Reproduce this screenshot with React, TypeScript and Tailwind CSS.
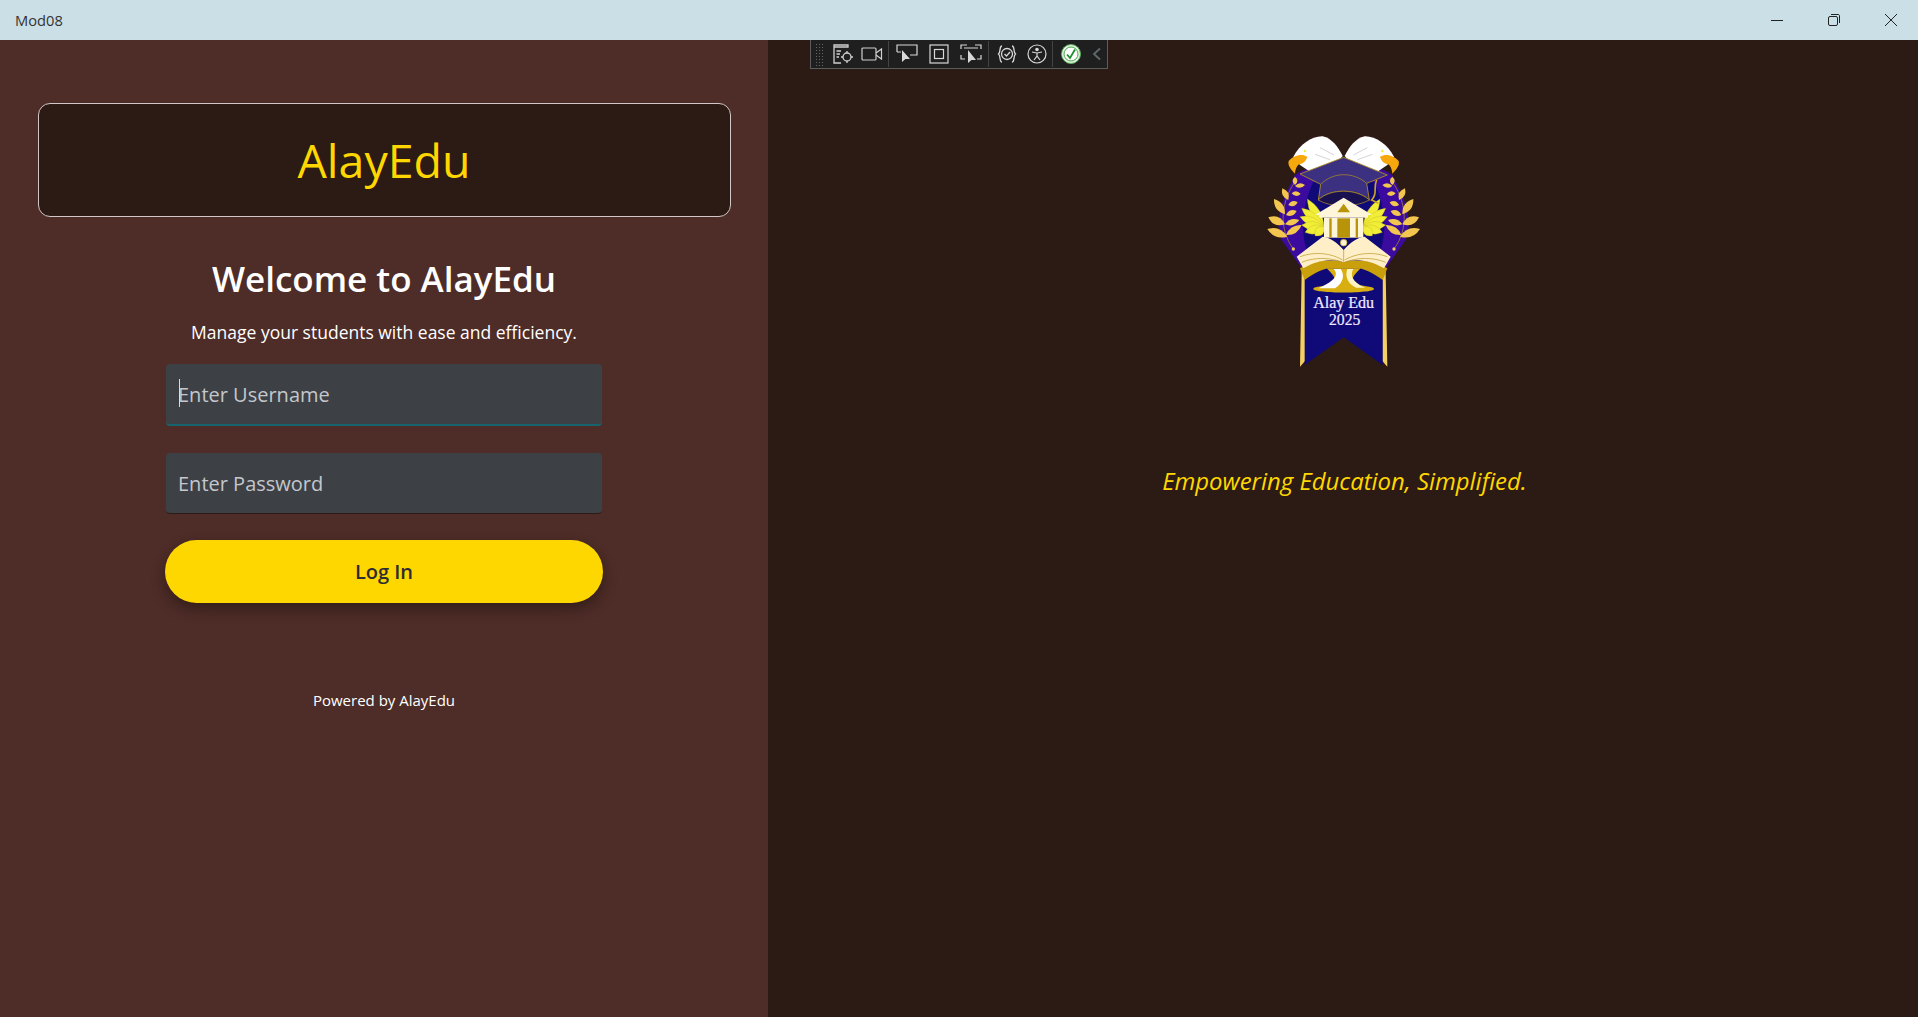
const leaves: [number, number, number, number, number][] = [
  [112, 335, 52, 312, 24],
  [105, 298, 55, 277, 24],
  [105, 268, 72, 222, 22],
  [115, 225, 97, 190, 18],
  [135, 180, 135, 155, 14],
  [108, 330, 155, 300, 20],
  [105, 298, 148, 285, 18],
  [108, 270, 140, 258, 16],
  [115, 240, 143, 232, 15],
  [125, 205, 152, 207, 14],
  [135, 183, 165, 180, 14],
]

const feathers: [number, number][] = [
  [172, 222],
  [155, 250],
  [150, 275],
  [155, 300],
  [165, 322],
  [195, 332],
]

// pointed leaf from base to tip
function leafPath(bx: number, by: number, tx: number, ty: number, w: number) {
  const mx = (bx + tx) / 2
  const my = (by + ty) / 2
  const len = Math.hypot(tx - bx, ty - by)
  const nx = (-(ty - by) / len) * w
  const ny = ((tx - bx) / len) * w
  return `M${bx} ${by}Q${mx + nx} ${my + ny} ${tx} ${ty}Q${mx - nx} ${my - ny} ${bx} ${by}Z`
}

function HalfLogo() {
  return (
    <g>
      <path d="M130 95C150 58 185 33 218 34C245 40 264 65 278 93L250 125L180 140L150 120Z" fill="#fff" />
      <path d="M195 88L240 104M210 68L252 90" stroke="#d5d5da" strokeWidth="3" fill="none" />
      <path d="M116 108C130 92 155 84 172 96C168 108 160 116 148 118C140 122 136 134 135 146C124 134 112 122 116 108Z" fill="#f7a80d" />
      <circle cx="165" cy="78" r="4" fill="#f3ee3a" />
      <path d="M130 372C85 310 90 230 142 160" fill="none" stroke="#b8941f" strokeWidth="2" />
      <circle cx="130" cy="372" r="5" fill="#f0c95a" />
      {leaves.map(([bx, by, tx, ty, w]) => (
        <path key={`${tx}-${ty}`} d={leafPath(bx, by, tx, ty, w)} fill="#f2c64f" />
      ))}
      {feathers.map(([tx, ty]) => (
        <path key={`${tx}-${ty}`} d={leafPath(222, 305, tx, ty, 26)} fill="#f2ee38" stroke="#b9ad18" strokeWidth="1" />
      ))}
    </g>
  )
}

function Logo() {
  return (
    <svg viewBox="0 0 570 735" className="w-[190px] h-[245px]">
      <path d="M135 150C190 105 372 105 427 150C462 220 492 280 467 345L407 430H155L95 345C70 280 100 220 135 150Z" fill="#3b0a9e" />
      <path d="M190 170H372C410 250 415 340 375 420H187C147 340 152 250 190 170Z" fill="#100a78" />
      <HalfLogo />
      <g transform="translate(562 0) scale(-1 1)">
        <HalfLogo />
      </g>
      <path d="M150 147L281 97L412 150L350 175L358 225C320 190 240 190 205 225L212 178Z" fill="#3b3180" stroke="#b8941f" strokeWidth="2.5" />
      <path d="M212 178C250 140 310 140 350 175" fill="none" stroke="#b8941f" strokeWidth="2" />
      <path d="M205 225C240 190 320 190 358 225C320 248 240 248 205 225Z" fill="#1a1250" stroke="#b8941f" strokeWidth="2" />
      <path d="M380 165C368 190 385 205 365 225L385 235" fill="none" stroke="#c9a227" strokeWidth="5" />
      <path d="M195 270L281 218L367 270Z" fill="#fff5d8" />
      <path d="M262 262L281 236L300 262Z" fill="#b8940a" />
      <rect x="208" y="268" width="146" height="10" fill="#fff5d8" />
      <rect x="222" y="278" width="118" height="60" fill="#fff5d8" />
      <rect x="262" y="280" width="38" height="58" fill="#b8940a" />
      <rect x="238" y="280" width="7" height="58" fill="#b8940a" />
      <rect x="317" y="280" width="7" height="58" fill="#b8940a" />
      <path d="M150 725L155 440H165V708ZM412 725L407 440H397V708Z" fill="#f4cf62" />
      <path d="M164 425H398V720L281 637L164 720Z" fill="#100a78" />
      <path d="M150 430C200 400 250 405 281 410C312 405 362 400 412 430L398 465C370 445 340 430 325 430H237C222 430 192 445 164 465Z" fill="#c9a00c" />
      <path d="M230 430C250 450 270 470 235 480C210 485 190 485 190 492C190 506 372 506 372 492C372 485 352 485 327 480C292 470 312 450 332 430Z" fill="#d9ae10" />
      <path d="M250 432C265 445 262 465 205 490H255C280 475 285 450 272 432Z" fill="#fff" />
      <path d="M310 432C300 450 305 470 345 488H318C290 475 285 450 292 432Z" fill="#fff3bf" />
      <path d="M281 375C260 350 240 338 218 335L140 395L160 430C200 405 250 400 281 412C312 400 362 405 402 430L422 395L344 335C322 338 302 350 281 375Z" fill="#ffefc8" />
      <path d="M150 395C195 378 245 385 278 405M155 412C195 395 245 398 278 412M412 395C367 378 317 385 284 405M407 412C367 395 317 398 284 412" fill="none" stroke="#b8941f" strokeWidth="2" />
      <path d="M281 375V412" stroke="#b8941f" strokeWidth="2" />
      <circle cx="281" cy="353" r="10" fill="#fff5d8" stroke="#b8940a" strokeWidth="2" />
      <text x="281" y="550" textAnchor="middle" fontSize="48" fill="#f1ebff" stroke="#f1ebff" strokeWidth="0.7" fontFamily="'Liberation Serif', serif">Alay Edu</text>
      <text x="284" y="600" textAnchor="middle" fontSize="47" fill="#f1ebff" stroke="#f1ebff" strokeWidth="0.5" fontFamily="'Liberation Serif', serif">2025</text>
    </svg>
  )
}

function Separator({ className }: { className: string }) {
  return <div className={`w-px h-[26px] bg-[#444] ${className}`} />
}

function DebugToolbar() {
  return (
    <div className="absolute left-[810px] top-[40px] w-[298px] h-[29px] flex items-center bg-[#1f1f1f] border border-t-0 border-[#5c5c5c]">
      <div className="w-[9px] h-[23px] ml-[4px] mr-[8px] bg-[radial-gradient(#666_1px,transparent_1px)] bg-[length:3px_3px]" />
      <svg viewBox="0 0 22 22" className="w-[22px] h-[22px]" fill="none" stroke="#cfcfcf" strokeWidth="1.3">
        <path d="M2 2H16V4H2ZM2 4V20H9M4.5 8H9M4.5 11H8M4.5 14H7" />
        <circle cx="15" cy="14" r="4" />
        <path d="M15 8V10M15 18V20M9 14H11M19 14H21" />
      </svg>
      <svg viewBox="0 0 22 16" className="w-[22px] h-[16px] ml-[7px]" fill="none" stroke="#cfcfcf" strokeWidth="1.2">
        <rect x="1" y="2" width="14" height="12" rx="1" />
        <path d="M15 7L20.5 3V13L15 9" />
      </svg>
      <Separator className="ml-[5px]" />
      <svg viewBox="0 0 22 20" className="w-[22px] h-[20px] ml-[7px]" fill="none" stroke="#d8d8d8" strokeWidth="1.2">
        <path d="M1 8V1H21V11H14M1 8H5" />
        <path d="M6 6V18L9.5 15L14 15Z" fill="#d8d8d8" stroke="none" />
      </svg>
      <svg viewBox="0 0 20 20" className="w-[20px] h-[20px] ml-[11px]" fill="none" stroke="#d8d8d8" strokeWidth="1.2">
        <rect x="1" y="1" width="18" height="18" />
        <rect x="5.5" y="5.5" width="9" height="9" />
      </svg>
      <svg viewBox="0 0 22 20" className="w-[22px] h-[20px] ml-[11px]" fill="none" stroke="#d8d8d8" strokeWidth="1.2">
        <path d="M1 5V1H7M15 1H21V5M1 11V15H5M21 11V15H17M4 4H18" />
        <path d="M8 6V19L11.5 16L16 16Z" fill="#d8d8d8" stroke="none" />
      </svg>
      <Separator className="ml-[6px]" />
      <svg viewBox="0 0 20 20" className="w-[20px] h-[20px] ml-[8px]" fill="none" stroke="#d8d8d8" strokeWidth="1.3">
        <path d="M5 2C2 2 4 8 1.5 10C4 12 2 18 5 18M15 2C18 2 16 8 18.5 10C16 12 18 18 15 18" />
        <circle cx="10" cy="10" r="5.5" />
        <path d="M7.5 10L9.5 12L13 8" />
      </svg>
      <svg viewBox="0 0 20 20" className="w-[20px] h-[20px] ml-[10px]" fill="none" stroke="#d8d8d8" strokeWidth="1.2">
        <circle cx="10" cy="10" r="9" />
        <circle cx="10" cy="5.5" r="1.2" fill="#d8d8d8" />
        <path d="M5 8L10 9L15 8M10 9V12L7 16M10 12L13 16" />
      </svg>
      <Separator className="ml-[5px]" />
      <svg viewBox="0 0 20 20" className="w-[20px] h-[20px] ml-[8px]">
        <circle cx="10" cy="10" r="9.5" fill="#e6f4e6" stroke="#5bb05b" />
        <circle cx="10" cy="10" r="7" fill="#fff" stroke="#49a649" />
        <path d="M6 10.5L9 14L14 5.5" fill="none" stroke="#1f8f2f" strokeWidth="1.8" />
      </svg>
      <svg viewBox="0 0 10 14" className="w-[10px] h-[14px] ml-[11px]" fill="none" stroke="#5f6b6b" strokeWidth="1.8">
        <path d="M8 1.5L2 7L8 12.5" />
      </svg>
    </div>
  )
}

function TitleBar() {
  return (
    <div className="h-10 shrink-0 flex items-center justify-between bg-[#cbdfe7] pl-[15px] font-['Open_Sans',sans-serif]">
      <span className="text-[14.7px] text-[#333]">Mod08</span>
      <div className="flex -mr-[1px]">
        <div className="w-[57px] h-10 flex items-center justify-center">
          <div className="w-3 h-px bg-[#222]" />
        </div>
        <div className="w-[57px] h-10 flex items-center justify-center">
          <svg viewBox="0 0 12 12" className="w-3 h-3" fill="none" stroke="#222">
            <rect x="0.5" y="2.5" width="9" height="9" rx="1.5" />
            <path d="M3 0.5H10C11 0.5 11.5 1 11.5 2V9" />
          </svg>
        </div>
        <div className="w-[57px] h-10 flex items-center justify-center">
          <svg viewBox="0 0 12 12" className="w-3 h-3" stroke="#222">
            <path d="M0 0L12 12M12 0L0 12" />
          </svg>
        </div>
      </div>
    </div>
  )
}

export default function App() {
  return (
    <div className="relative h-screen flex flex-col overflow-hidden font-['Open_Sans',sans-serif]">
      <TitleBar />
      <div className="flex flex-1">
        <div className="w-[768px] bg-[#4e2c27] flex flex-col items-center pt-[63px]">
          <div className="w-[693px] h-[114px] flex items-center justify-center rounded-xl border border-[#d0c8c6] bg-[#2c1a14]">
            <h1 className="text-[46.5px] font-medium text-[#ffd700] pt-[2px]">AlayEdu</h1>
          </div>
          <h2 className="mt-[38px] text-[35px] leading-[48px] font-semibold text-white">Welcome to AlayEdu</h2>
          <p className="mt-[17px] text-[17.5px] leading-[24px] text-white">Manage your students with ease and efficiency.</p>
          <div className="relative mt-[20px]">
            <input
              placeholder="Enter Username"
              className="block w-[436px] h-[62px] px-3 rounded bg-[#3d4045] border-b-2 border-[#17646f] text-xl placeholder:text-[#c4c7cc] outline-none"
            />
            <span className="absolute left-[13px] top-[15px] w-px h-7 bg-[#ddd]" />
          </div>
          <input
            placeholder="Enter Password"
            className="block mt-[27px] w-[436px] h-[61px] px-3 rounded bg-[#3d4045] border-b border-[#2c1a14] text-xl placeholder:text-[#c4c7cc] outline-none"
          />
          <button className="mt-[26px] w-[438px] h-[63px] pt-px rounded-full bg-[#ffd700] text-xl font-semibold text-[#2c2c34] shadow-[0_6px_14px_rgba(0,0,0,0.35)]">
            Log In
          </button>
          <p className="mt-[85px] text-[15px] leading-6 text-white">Powered by AlayEdu</p>
        </div>
        <div className="flex-1 bg-[#2c1a14] flex flex-col items-center pt-[85px] pl-[3px]">
          <Logo />
          <p className="mt-[93px] text-[23.9px] italic text-[#ffd700]">Empowering Education, Simplified.</p>
        </div>
      </div>
      <DebugToolbar />
    </div>
  )
}
